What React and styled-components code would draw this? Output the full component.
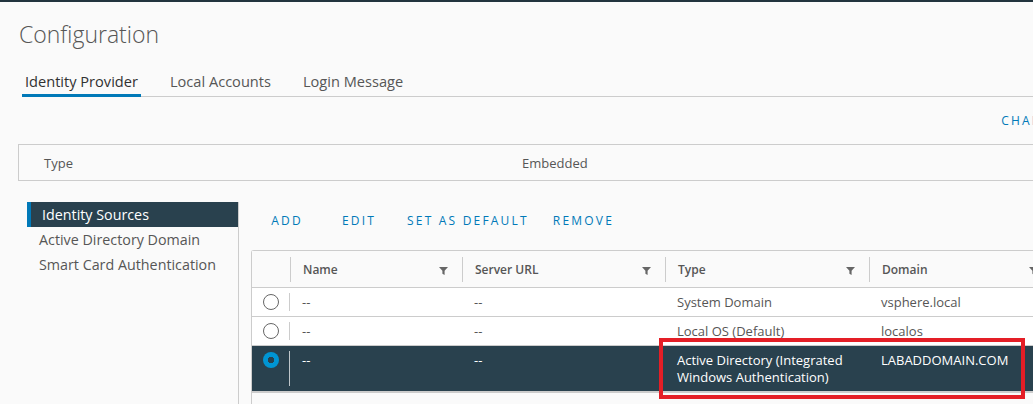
import React from 'react'
import styled, { createGlobalStyle } from 'styled-components'

const GlobalStyle = createGlobalStyle`
  html, body {
    margin: 0;
    padding: 0;
    background: #fafafa;
    overflow: hidden;
  }
  body {
    font-family: 'Open Sans', 'Liberation Sans', sans-serif;
    color: #565656;
  }
  * {
    box-sizing: border-box;
  }
`

const TopBar = styled.div`
  height: 2px;
  background: #22343e;
`
const Page = styled.div`
  width: 1229px;
  padding-left: 18px;
`
const Title = styled.h1`
  margin: 16px 0 0 1px;
  font-size: 23px;
  font-weight: 300;
  line-height: 32px;
  color: #565656;
`
const TabBar = styled.div`
  display: flex;
  margin: 17px 0 0 4px;
  border-bottom: 1px solid #cccccc;
`
const Tab = styled.div`
  height: 30px;
  margin-bottom: -1px;
  margin-right: 26px;
  padding: 0 3px;
  display: flex;
  align-items: center;
  font-size: 14.6px;
  color: ${p => (p.active ? '#313131' : '#565656')};
  border-bottom: 3px solid ${p => (p.active ? '#0079b8' : 'transparent')};
`
const ButtonRow = styled.div`
  height: 47px;
  display: flex;
  align-items: center;
  justify-content: flex-end;
`
const FlatButton = styled.button`
  height: 36px;
  min-width: 72px;
  padding: 0 12px;
  border: none;
  background: transparent;
  font-family: inherit;
  font-size: 12px;
  letter-spacing: 2.2px;
  text-transform: uppercase;
  color: #0079b8;
  white-space: nowrap;
  cursor: pointer;
`
const InfoBox = styled.div`
  display: grid;
  grid-template-columns: 478px 1fr;
  align-items: center;
  height: 37px;
  padding-left: 25px;
  border: 1px solid #cccccc;
  border-right: none;
  font-size: 13px;
  color: #565656;
`
const Lower = styled.div`
  display: flex;
  margin-top: 21px;
  margin-left: 9px;
`
const Sidebar = styled.nav`
  width: 212px;
  min-height: 260px;
  border-right: 1px solid #cccccc;
  display: flex;
  flex-direction: column;
`
const NavItem = styled.div`
  height: 25px;
  display: flex;
  align-items: center;
  font-size: 14.3px;
  padding-left: ${p => (p.active ? '11px' : '12px')};
  color: ${p => (p.active ? '#ffffff' : '#565656')};
  background: ${p => (p.active ? '#29414e' : 'transparent')};
  border-left: ${p => (p.active ? '4px solid #0079b8' : 'none')};
`
const Main = styled.div`
  padding-left: 12px;
  display: flex;
  flex-direction: column;
`
const Actions = styled.div`
  display: flex;
`
const Table = styled.div`
  position: relative;
  width: 802px;
  margin-top: 12px;
  border: 1px solid #cccccc;
  border-right: none;
  border-radius: 3px 0 0 0;
`
const Row = styled.div`
  display: grid;
  grid-template-columns: 38px 172px 203px 204px 183px;
  border-bottom: 1px solid #cccccc;
  background: ${p => (p.selected ? '#29414e' : p.header ? '#fafafa' : '#ffffff')};
  color: ${p => (p.selected ? '#ffffff' : '#565656')};
`
const HeadCell = styled.div`
  height: 36px;
  display: flex;
  align-items: center;
  font-size: 12px;
  font-weight: 600;
  color: #565656;
`
const HeadSep = styled.span`
  width: 1px;
  height: 25px;
  background: #cccccc;
`
const HeadLabel = styled.span`
  flex: 1;
  padding-left: 12px;
`
const FilterIcon = styled.svg`
  width: 9px;
  height: 8px;
  margin: 4px 14px 0 0;
  fill: #666666;
`
const SelectCell = styled.div`
  display: flex;
  justify-content: space-between;
  padding: 5px 0 5px 11px;
`
const Radio = styled.span`
  width: 16px;
  height: 16px;
  margin-top: 1px;
  border-radius: 50%;
  border: ${p => (p.checked ? 'none' : '1px solid #666666')};
  background: ${p =>
    p.checked ? 'radial-gradient(circle, #29414e 0 3px, #0095d3 3.5px)' : '#ffffff'};
`
const CellSep = styled.span`
  width: 1px;
  background: ${p => (p.light ? '#bfc6ca' : '#cccccc')};
`
const Cell = styled.div`
  padding: 6px 12px 5px;
  font-size: 13px;
  line-height: 17px;
`
const TableFoot = styled.div`
  height: 24px;
  border-top: 2px solid #cccccc;
  margin-top: -1px;
`
const Highlight = styled.div`
  position: absolute;
  left: 407px;
  top: 87px;
  width: 366px;
  height: 61px;
  border: 4px solid #e41e26;
  pointer-events: none;
`

const Filter = () => (
  <FilterIcon viewBox="0 0 9 8">
    <path d="M0 0H9L5.6 3.8V8L3.4 6.8V3.8Z" />
  </FilterIcon>
)

const columns = ['Name', 'Server URL', 'Type', 'Domain']

const sources = [
  { name: '--', url: '--', type: 'System Domain', domain: 'vsphere.local' },
  { name: '--', url: '--', type: 'Local OS (Default)', domain: 'localos' },
  {
    name: '--',
    url: '--',
    type: 'Active Directory (Integrated Windows Authentication)',
    domain: 'LABADDOMAIN.COM',
    selected: true
  }
]

const App = () => (
  <>
    <GlobalStyle />
    <TopBar />
    <Page>
      <Title>Configuration</Title>
      <TabBar>
        <Tab active>Identity Provider</Tab>
        <Tab>Local Accounts</Tab>
        <Tab>Login Message</Tab>
      </TabBar>
      <ButtonRow>
        <FlatButton>Change Identity Provider</FlatButton>
      </ButtonRow>
      <InfoBox>
        <span>Type</span>
        <span>Embedded</span>
      </InfoBox>
      <Lower>
        <Sidebar>
          <NavItem active>Identity Sources</NavItem>
          <NavItem>Active Directory Domain</NavItem>
          <NavItem>Smart Card Authentication</NavItem>
        </Sidebar>
        <Main>
          <Actions>
            <FlatButton>Add</FlatButton>
            <FlatButton>Edit</FlatButton>
            <FlatButton>Set as default</FlatButton>
            <FlatButton>Remove</FlatButton>
          </Actions>
          <Table>
            <Row header>
              <HeadCell />
              {columns.map(col => (
                <HeadCell key={col}>
                  <HeadSep />
                  <HeadLabel>{col}</HeadLabel>
                  <Filter />
                </HeadCell>
              ))}
            </Row>
            {sources.map((s, i) => (
              <Row key={i} selected={s.selected}>
                <SelectCell>
                  <Radio checked={s.selected} />
                  <CellSep light={s.selected} />
                </SelectCell>
                <Cell>{s.name}</Cell>
                <Cell>{s.url}</Cell>
                <Cell>{s.type}</Cell>
                <Cell>{s.domain}</Cell>
              </Row>
            ))}
            <TableFoot />
            <Highlight />
          </Table>
        </Main>
      </Lower>
    </Page>
  </>
)

export default App
